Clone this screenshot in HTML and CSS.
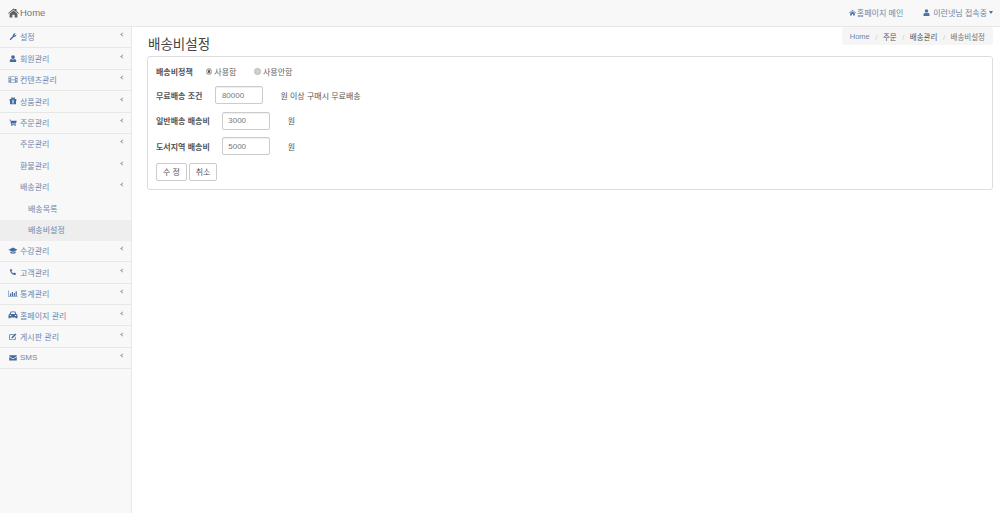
FILE: index.html
```html
<!DOCTYPE html>
<html lang="ko">
<head>
<meta charset="utf-8">
<title>배송비설정</title>
<link rel="stylesheet" href="styles.css">
</head>
<body>
<header class="topbar">
  <a class="brand"><svg class="brand-icon" viewBox="0 0 24 20"><path d="M12 0 L15 2.600 V1 H18.500 V5.600 L24 10.400 L22.600 11.600 L12 3 L1.400 11.600 L0 10.400 Z M3.500 11.800 L12 4.800 L20.500 11.800 V20 H14.500 V14 H9.500 V20 H3.500 Z"/></svg>Home</a>
  <nav class="topnav">
    <a class="toplink"><svg class="ico-sm" viewBox="0 0 24 20"><path d="M12 1 L24 11 L22.500 12.500 L12 4 L1.500 12.500 L0 11 Z M4 13 L12 6.500 L20 13 V20 H14 V15 H10 V20 H4 Z"/></svg>홈페이지 메인</a>
    <a class="toplink user"><svg class="ico-sm" viewBox="0 0 20 20"><circle cx="10" cy="5.500" r="5"/><path d="M1.500 20 V14.500 Q2 11 6 10.500 Q10 13.500 14 10.500 Q18 11 18.500 14.500 V20 Z"/></svg>이런넷님 접속중<span class="caret"></span></a>
  </nav>
</header>
<div class="layout">
  <aside class="sidebar">
    <ul class="menu">
      <li class="row"><svg class="ico" viewBox="0 0 20 20"><path d="M1 16.500 L9.500 8 A5.500 5.500 0 0 1 17 1.500 L13.500 5 L15 7 L18.500 3.500 A5.500 5.500 0 0 1 12 10.500 L3.500 19 Z"/></svg><span>설정</span><i class="chev"></i></li>
      <li class="row"><svg class="ico" viewBox="0 0 20 20"><circle cx="10" cy="5.500" r="5"/><path d="M1.500 19 V14.500 Q2 11 6 10.500 Q10 13.500 14 10.500 Q18 11 18.500 14.500 V19 Z"/></svg><span>회원관리</span><i class="chev"></i></li>
      <li class="row"><svg class="ico wide" viewBox="0 0 24 20"><path fill-rule="evenodd" opacity=".75" d="M0 1 H24 V19 H0 Z M1.500 2.500 V5 H5 V2.500 Z M1.500 8.500 V11.500 H5 V8.500 Z M1.500 15 V17.500 H5 V15 Z M19 2.500 V5 H22.500 V2.500 Z M19 8.500 V11.500 H22.500 V8.500 Z M19 15 V17.500 H22.500 V15 Z M7 2.500 V9 H17 V2.500 Z M7 11 V17.500 H17 V11 Z"/></svg><span>컨텐츠관리</span><i class="chev"></i></li>
      <li class="row"><svg class="ico" viewBox="0 0 20 20"><path fill-rule="evenodd" d="M1 5 H6 Q3 2 6 1 Q9 0.500 10 4 Q11 0.500 14 1 Q17 2 14 5 H19 V10 H18 V19 H2 V10 H1 Z M8.500 7 V17 H11.500 V7 Z"/></svg><span>상품관리</span><i class="chev"></i></li>
      <li class="row"><svg class="ico" viewBox="0 0 20 20"><path d="M0 2 H4 L4.600 4.500 H20 L18 12 H6.500 L6.800 13.500 H17.500 V15 H5 L2.800 3.500 H0 Z"/><circle cx="7" cy="17.500" r="1.800"/><circle cx="15.500" cy="17.500" r="1.800"/></svg><span>주문관리</span><i class="chev"></i></li>
      <li class="row sub"><span>주문관리</span><i class="chev"></i></li>
      <li class="row sub"><span>환불관리</span><i class="chev"></i></li>
      <li class="row sub"><span>배송관리</span><i class="chev"></i></li>
      <li class="row subsub"><span>배송목록</span></li>
      <li class="row subsub active"><span>배송비설정</span></li>
      <li class="row"><svg class="ico wide" viewBox="0 0 24 20"><path d="M12 1 L24 7 L12 13 L0 7 Z M5 11.500 L12 15 L19 11.500 V16 Q12 20 5 16 Z"/></svg><span>수강관리</span><i class="chev"></i></li>
      <li class="row"><svg class="ico" viewBox="0 0 20 20"><path d="M5 2 L8 6.500 L6 9 Q8 12.500 11.500 14 L14 12 L18.500 15 Q17.500 18.500 14.500 18.500 Q4 17 2 6 Q2 3 5 2 Z"/></svg><span>고객관리</span><i class="chev"></i></li>
      <li class="row"><svg class="ico wide" viewBox="0 0 24 20"><path d="M0 1 H1.500 V17.500 H24 V19 H0 Z M4 9 H7 V16 H4 Z M9 5 H12 V16 H9 Z M14 8 H17 V16 H14 Z M19 3 H22 V16 H19 Z"/></svg><span>통계관리</span><i class="chev"></i></li>
      <li class="row"><svg class="ico wide" viewBox="0 0 24 20"><path fill-rule="evenodd" d="M6 1 H18 L21 8 Q24 9 24 12 V19 H19 V17 H5 V19 H0 V12 Q0 9 3 8 Z M8 3.500 L6 8 H18 L16 3.500 Z M3.500 10.500 V13.500 H7 V10.500 Z M17 10.500 V13.500 H20.500 V10.500 Z"/></svg><span>홈페이지 관리</span><i class="chev"></i></li>
      <li class="row"><svg class="ico" viewBox="0 0 20 20"><path fill-rule="evenodd" d="M3 3 H13 L11 5 H3.500 Q2 5 2 6.500 V15.500 Q2 17 3.500 17 H13 Q15 17 15 15.500 V11 L17 9 V16 Q17 19 14 19 H3 Q0 19 0 16 V6 Q0 3 3 3 Z"/><path d="M6 11 L16 1 L19 4 L9 14 H6 Z"/></svg><span>게시판 관리</span><i class="chev"></i></li>
      <li class="row"><svg class="ico" viewBox="0 0 20 20"><path d="M0 3 H20 V6 L10 12 L0 6 Z M0 8 L10 14 L20 8 V17 H0 Z"/></svg><span>SMS</span><i class="chev"></i></li>
    </ul>
  </aside>
  <main class="content">
    <div class="head">
      <h1 class="title">배송비설정</h1>
      <ol class="crumb">
        <li class="crumb-link">Home</li>
        <li class="crumb-strong">주문</li>
        <li class="crumb-strong">배송관리</li>
        <li class="crumb-now">배송비설정</li>
      </ol>
    </div>
    <form class="panel">
      <div class="line radios">
        <span class="lab">배송비정책</span>
        <label class="radio first"><input type="radio" name="p" checked>사용함</label>
        <label class="radio"><input type="radio" name="p">사용안함</label>
      </div>
      <div class="line">
        <span class="lab">무료배송 조건</span>
        <input class="field f1" type="text" value="80000">
        <span class="note n1">원 이상 구매시 무료배송</span>
      </div>
      <div class="line">
        <span class="lab">일반배송 배송비</span>
        <input class="field f2" type="text" value="3000">
        <span class="note">원</span>
      </div>
      <div class="line">
        <span class="lab">도서지역 배송비</span>
        <input class="field f2" type="text" value="5000">
        <span class="note">원</span>
      </div>
      <div class="btns">
        <button class="btn b1" type="button">수 정</button>
        <button class="btn b2" type="button">취소</button>
      </div>
    </form>
  </main>
</div>
</body>
</html>
```
FILE: styles.css
```css
* { box-sizing: border-box; }
html, body { margin: 0; height: 513px; overflow: hidden; }
body {
  font-family: "Liberation Sans", "Noto Sans CJK KR", sans-serif;
  font-size: 8px;
  color: #555;
  background: #fff;
}
.topbar {
  height: 27px;
  display: flex;
  align-items: center;
  justify-content: space-between;
  background: #f8f8f8;
  border-bottom: 1px solid #e7e7e7;
  padding: 0 7px 1px 8px;
}
.brand {
  display: flex;
  align-items: center;
  gap: 1px;
  font-size: 9.500px;
  color: #777;
}
.brand-icon { width: 11px; height: 10px; fill: #5f5f5f; }
.topnav { display: flex; align-items: center; gap: 20px; }
.toplink { display: flex; align-items: center; color: #6d87ad; font-size: 8px; }
.ico-sm { width: 7px; height: 7px; fill: #4c72a8; margin-right: 1px; }
.user .ico-sm { margin-right: 3px; }
.caret {
  margin-left: 2px;
  border-top: 3px solid #4c72a8;
  border-left: 2.500px solid transparent;
  border-right: 2.500px solid transparent;
}
.layout { display: flex; height: 486px; }
.sidebar {
  width: 132px;
  flex: none;
  background: #f8f8f8;
  border-right: 1px solid #e7e7e7;
}
.menu { list-style: none; margin: 0; padding: 0; }
.row {
  height: 21.400px;
  display: flex;
  align-items: center;
  padding: 0 7px 0.500px 9px;
  border-bottom: 1px solid #e7e7e7;
  color: #6d87ad;
  font-size: 8px;
}
.row > span { flex: 1; }
.ico { width: 8px; height: 7.500px; fill: #44699f; margin-right: 3px; flex: none; }
.ico.wide { width: 10px; margin-left: -1px; margin-right: 2px; }
.sub { padding-left: 20px; border-bottom-color: transparent; }
.subsub { padding-left: 28px; border-bottom-color: transparent; }
.active { background: #eeeeee; }
.chev {
  width: 3px;
  height: 3px;
  border-left: 1px solid #8a9bb5;
  border-bottom: 1px solid #8a9bb5;
  transform: rotate(45deg);
  margin: -4px 0 0 0;
}
.content { flex: 1; min-width: 0; padding: 0 7px 0 15px; }
.head { display: flex; justify-content: space-between; align-items: flex-start; height: 29px; }
.title {
  margin: 9px 0 0 1px;
  font-size: 13.500px;
  font-weight: 400;
  line-height: 17px;
  color: #444;
}
.crumb {
  list-style: none;
  display: flex;
  align-items: center;
  margin: 0;
  height: 18px;
  padding: 0 8px;
  background: #f5f5f5;
  border-radius: 3px;
  font-size: 7.500px;
}
.crumb li + li::before { content: "/"; color: #ccc; padding: 0 5.500px; font-weight: 400; }
.crumb-link { color: #6d87ad; }
.crumb-strong { color: #555; }
.crumb-now { color: #777; }
.panel {
  height: 134px;
  border: 1px solid #ddd;
  border-radius: 3px;
  padding: 7px 8px 0;
  background: #fff;
}
.line { display: flex; align-items: center; height: 18px; margin-bottom: 7.500px; }
.radios { height: 14.500px; }
.lab { font-weight: 700; font-size: 8px; color: #555; white-space: nowrap; }
.radio { display: flex; align-items: center; color: #666; font-size: 8px; margin-left: 18px; }
.radio.first { margin-left: 13px; }
.radio input {
  appearance: none;
  width: 6.500px;
  height: 6.500px;
  margin: 0 2px 0 0;
  border-radius: 50%;
  background: #d0d0d0;
  border: 1px solid #bbb;
}
.radio input:checked { background: #555; box-shadow: inset 0 0 0 1px #ddd; }
.field {
  height: 18px;
  border: 1px solid #ccc;
  border-radius: 2px;
  padding: 0 5.500px;
  font: 8px "Liberation Sans", sans-serif;
  color: #777;
  box-shadow: inset 0 1px 1px rgba(0,0,0,.07);
  background: #fff;
}
.f1 { width: 48px; margin-left: 13px; }
.f2 { width: 48px; margin-left: 12px; }
.note { font-size: 8px; color: #555; margin-left: 18px; }
.note.n1 { margin-left: 17px; }
.btns { display: flex; gap: 2px; }
.btn {
  height: 18px;
  padding: 0;
  background: #fff;
  border: 1px solid #ccc;
  border-radius: 2px;
  font: 8px "Liberation Sans", "Noto Sans CJK KR", sans-serif;
  color: #555;
}
.b1 { width: 31px; }
.b2 { width: 28px; }
```
